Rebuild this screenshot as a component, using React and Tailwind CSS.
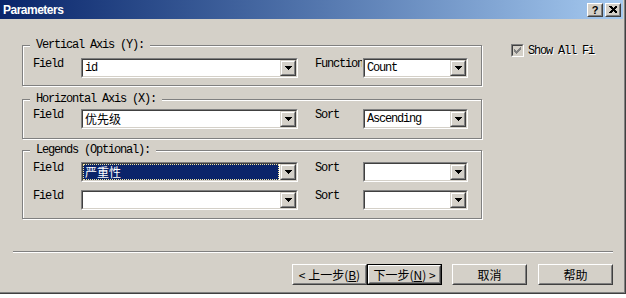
import React from 'react';

const mono = "font-['Liberation_Mono','Noto_Sans_CJK_SC',monospace] text-[12px] tracking-[-1.2px] leading-[12px] text-black";
const cjk = "font-['Noto_Sans_CJK_SC',sans-serif] text-[12px] tracking-normal leading-[14px]";

function Arrow() {
  return (
    <svg width="7" height="4" viewBox="0 0 7 4" shapeRendering="crispEdges">
      <path d="M0 0H7V1H6V2H5V3H4V4H3V3H2V2H1V1H0Z" fill="#000" />
    </svg>
  );
}

function DropButton() {
  return (
    <div className="w-[16px] border border-t-[#d4d0c8] border-l-[#d4d0c8] border-b-[#404040] border-r-[#404040]">
      <div className="flex h-full items-center justify-center border border-t-white border-l-white border-b-[#808080] border-r-[#808080] bg-[#d4d0c8]">
        <Arrow />
      </div>
    </div>
  );
}

function Combo({ width, children, selected }) {
  return (
    <div className={`flex h-[20px] border border-t-[#808080] border-l-[#808080] border-b-white border-r-white ${width}`}>
      <div className="flex flex-1 border border-t-[#404040] border-l-[#404040] border-b-[#d4d0c8] border-r-[#d4d0c8] bg-white">
        {selected ? (
          <div className="mr-[1px] flex flex-1 items-center bg-[#0a246a] pl-[2px] text-white outline-1 outline-dotted -outline-offset-1 outline-[#f3e7a0]">
            {children}
          </div>
        ) : (
          <div className="flex flex-1 items-center pl-[2px]">{children}</div>
        )}
        <DropButton />
      </div>
    </div>
  );
}

function Group({ title, className, children }) {
  return (
    <div className={`relative border border-[#808080] shadow-[inset_1px_1px_0_#fff,1px_1px_0_#fff] ${className}`}>
      <span className={`absolute -top-[7px] left-[7px] bg-[#d4d0c8] px-[6px] ${mono}`}>{title}</span>
      {children}
    </div>
  );
}

function Row({ label, combo, label2, combo2 }) {
  return (
    <div className="flex items-start pl-[10px]">
      <span className={`w-[48px] ${mono}`}>{label}</span>
      {combo}
      <span className={`ml-[17px] w-[47px] overflow-hidden whitespace-nowrap ${mono}`}>{label2}</span>
      <div className="ml-[1px]">{combo2}</div>
    </div>
  );
}

function Check() {
  const cells = [
    [6, 0, 1], [5, 1, 2], [0, 2, 1], [4, 2, 3], [0, 3, 2], [3, 3, 3], [0, 4, 5], [1, 5, 3], [2, 6, 1],
  ];
  return (
    <svg width="7" height="7" viewBox="0 0 7 7" shapeRendering="crispEdges">
      {cells.map(([x, y, w], i) => (
        <rect key={i} x={x} y={y} width={w} height="1" fill="#808080" />
      ))}
    </svg>
  );
}

function PushButton({ children, focused, className }) {
  return (
    <div className={`h-[21px] w-[75px] ${focused ? 'border border-black' : ''} ${className || ''}`}>
      <div className="flex h-full items-center justify-center border border-t-white border-l-white border-b-[#404040] border-r-[#404040]">
        <div className="flex h-full w-full items-center justify-center border border-t-[#d4d0c8] border-l-[#d4d0c8] border-b-[#808080] border-r-[#808080]">
          <span className={`${cjk} text-black`}>{children}</span>
        </div>
      </div>
    </div>
  );
}

function CaptionButton({ children }) {
  return (
    <div className="h-[14px] w-[16px] border border-t-white border-l-white border-b-[#404040] border-r-[#404040]">
      <div className="flex h-full items-center justify-center border border-t-[#d4d0c8] border-l-[#d4d0c8] border-b-[#808080] border-r-[#808080] bg-[#d4d0c8]">
        {children}
      </div>
    </div>
  );
}

export default function App() {
  return (
    <div className="h-[298px] w-[626px] overflow-hidden bg-white">
      <div className="flex h-[294px] w-[626px] border-r border-b border-[#404040]">
        <div className="flex flex-1 flex-col border-r border-b border-[#808080] bg-[#d4d0c8] pr-[1px]">
          {/* title bar */}
          <div className="flex h-[19px] items-center bg-gradient-to-r from-[#0a246a] to-[#a6caf0] pl-[3px] pr-[2px]">
            <span className="font-['Liberation_Sans',sans-serif] text-[12px] font-bold tracking-[-0.5px] text-white">
              Parameters
            </span>
            <div className="ml-auto flex gap-[2px]">
              <CaptionButton>
                <span className="font-['Liberation_Sans',sans-serif] text-[11px] font-bold leading-[10px] text-black">?</span>
              </CaptionButton>
              <CaptionButton>
                <svg width="8" height="7" viewBox="0 0 8 7" shapeRendering="crispEdges">
                  <path d="M0 0h2l2 2 2-2h2v1L5.5 3.5 8 6v1H6L4 5 2 7H0V6l2.5-2.5L0 1z" fill="#000" />
                </svg>
              </CaptionButton>
            </div>
          </div>

          {/* content */}
          <div className="mt-[26px] flex">
            <div className="ml-[22px] flex w-[460px] flex-col">
              <Group title="Vertical Axis (Y):" className="h-[41px] pt-[12px]">
                <Row
                  label="Field"
                  combo={<Combo width="w-[217px]"><span className={mono}>id</span></Combo>}
                  label2="Function"
                  combo2={<Combo width="w-[105px]"><span className={mono}>Count</span></Combo>}
                />
              </Group>
              <Group title="Horizontal Axis (X):" className="mt-[13px] h-[40px] pt-[9px]">
                <Row
                  label="Field"
                  combo={<Combo width="w-[217px]"><span className={cjk}>优先级</span></Combo>}
                  label2="Sort"
                  combo2={<Combo width="w-[105px]"><span className={mono}>Ascending</span></Combo>}
                />
              </Group>
              <Group title="Legends (Optional):" className="mt-[11px] h-[69px] pt-[11px]">
                <div className="flex flex-col gap-[8px]">
                  <Row
                    label="Field"
                    combo={<Combo width="w-[217px]" selected><span className={cjk}>严重性</span></Combo>}
                    label2="Sort"
                    combo2={<Combo width="w-[105px]" />}
                  />
                  <Row
                    label="Field"
                    combo={<Combo width="w-[217px]" />}
                    label2="Sort"
                    combo2={<Combo width="w-[105px]" />}
                  />
                </div>
              </Group>
            </div>

            <div className="ml-[29px] -mt-[1px] flex h-[13px] items-center">
              <div className="h-[13px] w-[13px] border border-t-[#808080] border-l-[#808080] border-b-white border-r-white">
                <div className="flex h-full items-center justify-center border border-t-[#404040] border-l-[#404040] border-b-[#d4d0c8] border-r-[#d4d0c8] bg-[#d4d0c8]">
                  <Check />
                </div>
              </div>
              <span className={`ml-[4px] whitespace-nowrap ${mono} text-[#808080] [text-shadow:1px_1px_0_#fff]`}>
                Show All Fi
              </span>
            </div>
          </div>

          {/* separator */}
          <div className="ml-[13px] mt-[32px] w-[600px] border-t border-b border-t-[#808080] border-b-white" />

          {/* buttons */}
          <div className="mt-[11px] flex pl-[292px]">
            <PushButton>
              &lt; 上一步(<u>B</u>)
            </PushButton>
            <PushButton focused>
              下一步(<u>N</u>) &gt;
            </PushButton>
            <PushButton className="ml-[10px]">取消</PushButton>
            <PushButton className="ml-[11px]">帮助</PushButton>
          </div>
        </div>
      </div>
    </div>
  );
}
